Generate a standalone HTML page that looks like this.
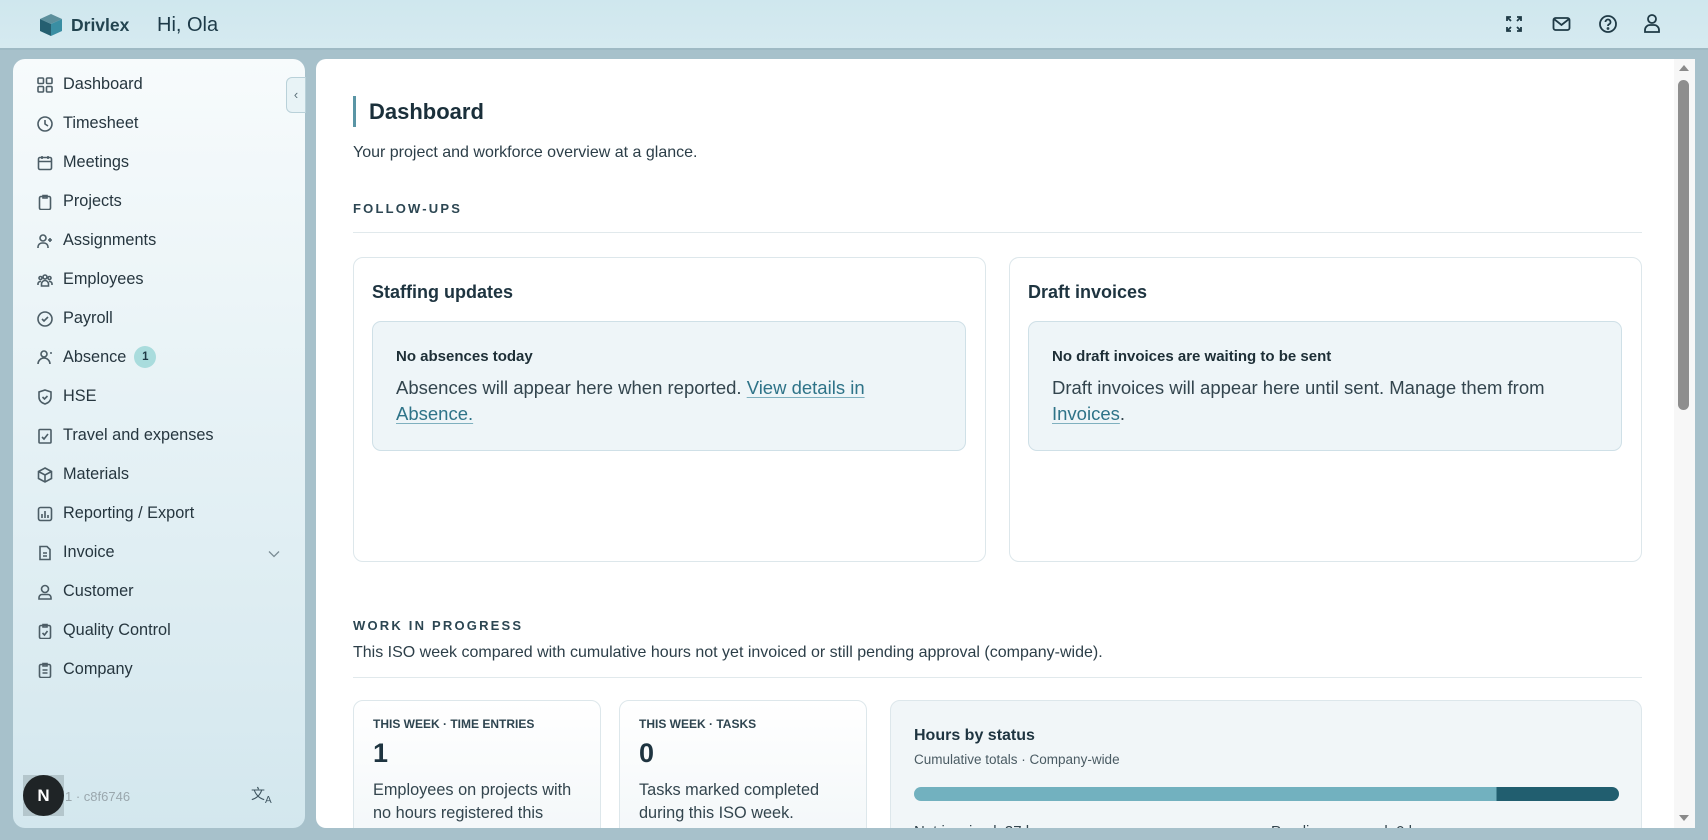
<!DOCTYPE html>
<html><head><meta charset="utf-8"><style>
*{box-sizing:border-box;margin:0;padding:0}
body{width:1708px;height:840px;overflow:hidden;background:#a7c1cb;font-family:"Liberation Sans",sans-serif;color:#1e3440;position:relative}
.top{position:absolute;left:0;top:0;width:1708px;height:50px;background:linear-gradient(#cfe7ee,#d6eaf0);border-bottom:2px solid #9fbac4}
.abs{position:absolute}
.side{position:absolute;left:13px;top:59px;width:292px;height:769px;border-radius:12px;background:linear-gradient(#f7fbfc,#d3e7ee)}
.nav{position:absolute;left:50px;font-size:16.3px;color:#26363f;display:flex;align-items:center}
.nav svg{position:absolute;left:-26px;width:16px;height:16px;fill:none;stroke:#4c5d66;stroke-width:1.6}
.main{position:absolute;left:316px;top:59px;width:1379px;height:769px;background:#fff;border-radius:10px 0 0 10px;overflow:hidden}
.card{position:absolute;border:1px solid #dde7eb;border-radius:10px;background:#fff}
.inner{position:absolute;border:1px solid #cfe0e7;border-radius:9px;background:#eef5f8}
.lbl{font-size:13px;letter-spacing:2.2px;font-weight:700;color:#2c4652}
a{color:#2e7388;text-decoration:underline;text-decoration-color:#7fb0bf;text-underline-offset:3px}
</style></head><body>
<div class="top">
 <svg class="abs" style="left:39px;top:13px" width="25" height="24" viewBox="0 0 25 24"><path d="M12 1 L23 6 L12 11 L1 6Z" fill="#5c8f9c"/><path d="M1 6 L12 11 L12 23 L1 18Z" fill="#255f70"/><path d="M23 6 L12 11 L12 23 L23 18Z" fill="#3a8ea3"/></svg>
 <div class="abs" style="left:71px;top:15px;font-size:17.5px;font-weight:600;color:#234450">Drivlex</div>
 <div class="abs" style="left:157px;top:14px;font-size:20px;color:#1d3a48">Hi, Ola</div>
 <svg class="abs" style="left:1505px;top:15px" width="18" height="18" viewBox="0 0 18 18" fill="none" stroke="#1f3a46" stroke-width="1.8"><path d="M2 6V2h4M2 2l4 4M16 6V2h-4M16 2l-4 4M2 12v4h4M2 16l4-4M16 12v4h-4M16 16l-4-4"/></svg>
 <svg class="abs" style="left:1552px;top:15px" width="19" height="18" viewBox="0 0 19 18" fill="none" stroke="#1f3a46" stroke-width="1.8"><rect x="1.5" y="3" width="16" height="12" rx="2"/><path d="M2 4l7.5 6L17 4"/></svg>
 <svg class="abs" style="left:1598px;top:14px" width="20" height="20" viewBox="0 0 20 20" fill="none" stroke="#1f3a46" stroke-width="1.8"><circle cx="10" cy="10" r="8"/><path d="M7.5 8a2.5 2.5 0 1 1 3.5 2.3c-.8.4-1 .9-1 1.7"/><circle cx="10" cy="14.5" r=".5" fill="#1f3a46"/></svg>
 <svg class="abs" style="left:1643px;top:13px" width="18" height="21" viewBox="0 0 18 21" fill="none" stroke="#1f3a46" stroke-width="1.8"><circle cx="9" cy="6" r="4"/><path d="M2 19v-2a5 5 0 0 1 5-5h4a5 5 0 0 1 5 5v2z"/></svg>
</div>
<div class="side">
 <div class="abs" style="left:273px;top:18px;width:20px;height:36px;border:1px solid #b9d1d9;border-radius:6px 0 0 6px;background:#e8f3f6;color:#5a6f78;font-size:13px;text-align:center;line-height:33px">‹</div>
 <div class="nav" style="top:16px">  <svg viewBox="0 0 16 16"><rect x="1" y="1" width="5.5" height="5.5" rx="1"/><rect x="9.5" y="1" width="5.5" height="5.5" rx="1"/><rect x="1" y="9.5" width="5.5" height="5.5" rx="1"/><rect x="9.5" y="9.5" width="5.5" height="5.5" rx="1"/></svg>Dashboard</div>
 <div class="nav" style="top:55px"><svg viewBox="0 0 16 16"><circle cx="8" cy="8" r="7"/><path d="M8 4v4l3 2"/></svg>Timesheet</div>
 <div class="nav" style="top:94px"><svg viewBox="0 0 16 16"><rect x="1.5" y="2.5" width="13" height="12" rx="1.5"/><path d="M1.5 6.5h13M5 1v3M11 1v3"/></svg>Meetings</div>
 <div class="nav" style="top:133px"><svg viewBox="0 0 16 16"><rect x="2.5" y="2.5" width="11" height="13" rx="1.5"/><path d="M6 1.5h4v2.5H6z"/></svg>Projects</div>
 <div class="nav" style="top:172px"><svg viewBox="0 0 16 16"><circle cx="6" cy="5" r="3"/><path d="M1 15v-1a4 4 0 0 1 4-4h2a4 4 0 0 1 4 4v1M13 5v4M11 7h4"/></svg>Assignments</div>
 <div class="nav" style="top:211px"><svg viewBox="0 0 16 16"><circle cx="8" cy="5" r="2"/><circle cx="3.5" cy="6" r="1.5"/><circle cx="12.5" cy="6" r="1.5"/><path d="M4.5 14v-2a3.5 3.5 0 0 1 7 0v2zM1 13v-1.5a2.5 2.5 0 0 1 3-2M15 13v-1.5a2.5 2.5 0 0 0-3-2"/></svg>Employees</div>
 <div class="nav" style="top:250px"><svg viewBox="0 0 16 16"><circle cx="8" cy="8" r="7"/><path d="M5 8l2 2 4-4"/></svg>Payroll</div>
 <div class="nav" style="top:287px"><svg viewBox="0 0 16 16"><circle cx="7" cy="5" r="3"/><path d="M1 15a6 6 0 0 1 12 0M13 4h2"/></svg>Absence<span style="margin-left:8px;width:22px;height:22px;border-radius:11px;background:#a9dcdd;font-size:11.5px;font-weight:700;text-align:center;line-height:22px;color:#1f3a46">1</span></div>
 <div class="nav" style="top:328px"><svg viewBox="0 0 16 16"><path d="M8 1l6 2v5c0 4-3 6-6 7-3-1-6-3-6-7V3z"/><path d="M5.5 8l2 2 3-3"/></svg>HSE</div>
 <div class="nav" style="top:367px"><svg viewBox="0 0 16 16"><rect x="2" y="1.5" width="12" height="13.5" rx="1"/><path d="M5 9l2 2 4-5"/></svg>Travel and expenses</div>
 <div class="nav" style="top:406px"><svg viewBox="0 0 16 16"><path d="M8 1l6.5 3.5v7L8 15l-6.5-3.5v-7zM1.5 4.5L8 8l6.5-3.5M8 8v7"/></svg>Materials</div>
 <div class="nav" style="top:445px"><svg viewBox="0 0 16 16"><rect x="1.5" y="1.5" width="13" height="13" rx="2"/><path d="M5 12V8M8 12V5M11 12V9"/></svg>Reporting / Export</div>
 <div class="nav" style="top:484px"><svg viewBox="0 0 16 16"><path d="M3 1.5h7l3 3v10H3z"/><path d="M6 8h4M6 11h4"/></svg>Invoice</div>
 <svg class="abs" style="left:255px;top:491px" width="12" height="8" viewBox="0 0 12 8" fill="none" stroke="#7b8c94" stroke-width="1.3"><path d="M1 1.5l5 5 5-5"/></svg>
 <div class="nav" style="top:523px"><svg viewBox="0 0 16 16"><circle cx="8" cy="5" r="3.5"/><path d="M2 15v-1.5a3 3 0 0 1 3-3h6a3 3 0 0 1 3 3V15z"/></svg>Customer</div>
 <div class="nav" style="top:562px"><svg viewBox="0 0 16 16"><rect x="2.5" y="2.5" width="11" height="13" rx="1.5"/><path d="M6 1.5h4v2.5H6zM5.5 10l2 2 3-4"/></svg>Quality Control</div>
 <div class="nav" style="top:601px"><svg viewBox="0 0 16 16"><rect x="2.5" y="2.5" width="11" height="13" rx="1.5"/><path d="M6 1.5h4v2.5H6zM5.5 8h5M5.5 11h5"/></svg>Company</div>
 <div class="abs" style="left:10px;top:716px;width:41px;height:41px;background:#b4c6cc"></div>
 <div class="abs" style="left:10px;top:716px;width:41px;height:41px;border-radius:50%;background:#1f2426;color:#fff;font-size:17px;font-weight:700;text-align:center;line-height:41px">N</div>
 <div class="abs" style="left:52px;top:730px;font-size:13px;color:#9aa7ad">1 · c8f6746</div>
 <div class="abs" style="left:238px;top:725px;font-size:14px;color:#3e5560">文<sub style="font-size:10px">A</sub></div>
</div>
<div class="main">
 <div class="abs" style="left:37px;top:37px;width:3px;height:31px;background:#5a95a5"></div>
 <div class="abs" style="left:53px;top:40px;font-size:22px;font-weight:600;color:#1a2f3a">Dashboard</div>
 <div class="abs" style="left:37px;top:85px;font-size:16px;color:#2c3e48">Your project and workforce overview at a glance.</div>
 <div class="abs lbl" style="left:37px;top:142px">FOLLOW-UPS</div>
 <div class="abs" style="left:37px;top:173px;width:1289px;height:1px;background:#e1e9ec"></div>
 <div class="card" style="left:37px;top:198px;width:633px;height:305px">
  <div class="abs" style="left:18px;top:24px;font-size:18px;font-weight:600">Staffing updates</div>
  <div class="inner" style="left:18px;top:63px;width:594px;height:130px">
   <div class="abs" style="left:23px;top:26px;font-size:15px;font-weight:600;color:#1d2e36">No absences today</div>
   <div class="abs" style="left:23px;top:53px;width:540px;font-size:18.5px;line-height:26px;color:#33454e">Absences will appear here when reported. <a>View details in Absence.</a></div>
  </div>
 </div>
 <div class="card" style="left:693px;top:198px;width:633px;height:305px">
  <div class="abs" style="left:18px;top:24px;font-size:18px;font-weight:600">Draft invoices</div>
  <div class="inner" style="left:18px;top:63px;width:594px;height:130px">
   <div class="abs" style="left:23px;top:26px;font-size:15px;font-weight:600;color:#1d2e36">No draft invoices are waiting to be sent</div>
   <div class="abs" style="left:23px;top:53px;width:560px;font-size:18.5px;line-height:26px;color:#33454e">Draft invoices will appear here until sent. Manage them from <a>Invoices</a>.</div>
  </div>
 </div>
 <div class="abs lbl" style="left:37px;top:559px">WORK IN PROGRESS</div>
 <div class="abs" style="left:37px;top:585px;font-size:16px;color:#2c3e48">This ISO week compared with cumulative hours not yet invoiced or still pending approval (company-wide).</div>
 <div class="abs" style="left:37px;top:618px;width:1289px;height:1px;background:#e1e9ec"></div>
 <div class="card" style="left:37px;top:641px;width:248px;height:160px;background:linear-gradient(#fff,#f1f6f8)">
  <div class="abs" style="left:19px;top:16px;font-size:12px;font-weight:600;color:#2e4550">THIS WEEK · TIME ENTRIES</div>
  <div class="abs" style="left:19px;top:37px;font-size:27px;font-weight:600">1</div>
  <div class="abs" style="left:19px;top:78px;width:225px;font-size:16.3px;line-height:23px;color:#33454e;white-space:nowrap">Employees on projects with<br>no hours registered this<br>ISO week.</div>
 </div>
 <div class="card" style="left:303px;top:641px;width:248px;height:160px;background:linear-gradient(#fff,#f1f6f8)">
  <div class="abs" style="left:19px;top:16px;font-size:12px;font-weight:600;color:#2e4550">THIS WEEK · TASKS</div>
  <div class="abs" style="left:19px;top:37px;font-size:27px;font-weight:600">0</div>
  <div class="abs" style="left:19px;top:78px;width:205px;font-size:16.3px;line-height:23px;color:#33454e">Tasks marked completed during this ISO week.</div>
 </div>
 <div class="card" style="left:574px;top:641px;width:752px;height:160px;background:#f1f6f8">
  <div class="abs" style="left:23px;top:26px;font-size:16px;font-weight:600">Hours by status</div>
  <div class="abs" style="left:23px;top:51px;font-size:13.5px;color:#4a5b63">Cumulative totals · Company-wide</div>
  <div class="abs" style="left:23px;top:86px;width:705px;height:14px;border-radius:7px;background:linear-gradient(90deg,#72b1bf 0 82.6%,#215e6f 82.6%)"></div>
  <div class="abs" style="left:23px;top:122px;font-size:15px;color:#33454e">Not invoiced: 37 h</div>
  <div class="abs" style="left:380px;top:122px;font-size:15px;color:#33454e">Pending approval: 0 h</div>
 </div>
 <div class="abs" style="left:1358px;top:0;width:21px;height:769px;background:#f7f7f7"></div>
 <div class="abs" style="left:1363px;top:6px;width:0;height:0;border-left:5px solid transparent;border-right:5px solid transparent;border-bottom:6px solid #8a8a8a"></div>
 <div class="abs" style="left:1362px;top:21px;width:11px;height:330px;border-radius:6px;background:#8e8e8e"></div>
 <div class="abs" style="left:1363px;top:756px;width:0;height:0;border-left:5px solid transparent;border-right:5px solid transparent;border-top:6px solid #8a8a8a"></div>
</div>
</body></html>
